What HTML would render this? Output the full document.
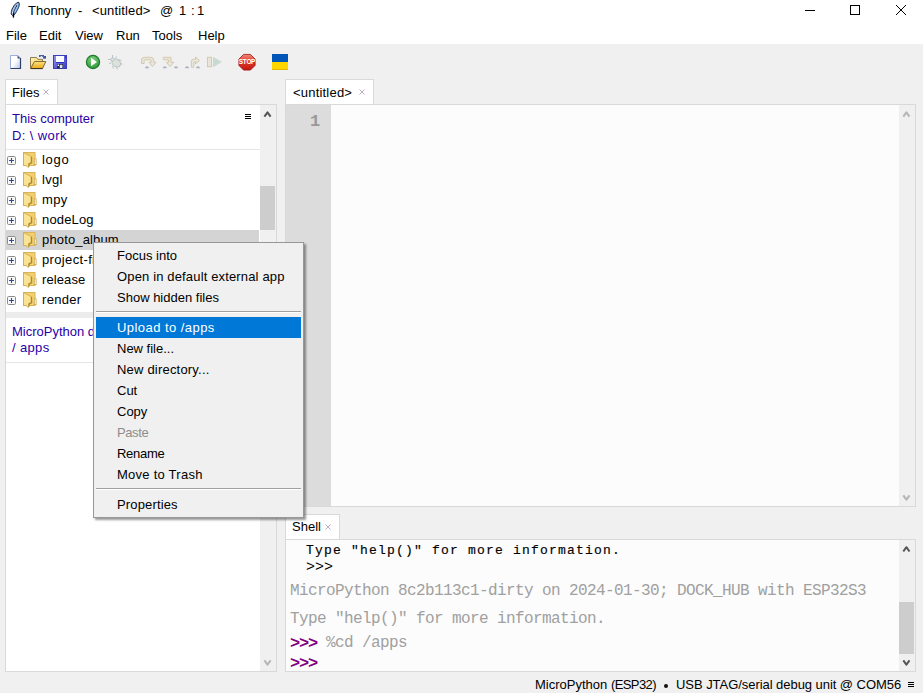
<!DOCTYPE html>
<html><head><meta charset="utf-8">
<style>
*{margin:0;padding:0;box-sizing:border-box}
html,body{width:923px;height:693px;overflow:hidden;background:#f0f0f0;font-family:"Liberation Sans",sans-serif;font-size:13px;color:#000}
.t{position:absolute;white-space:pre;line-height:13px;height:13px}
svg{position:absolute;overflow:visible}
#titlebar{position:absolute;left:0;top:0;width:923px;height:44px;background:#fff}
.box{position:absolute;background:#fff;border:1px solid #d9d9d9}
.sb{position:absolute;background:#f0f0f0}
.thumb{position:absolute;background:#cdcdcd}
.mono{font-family:"Liberation Mono",monospace}
.blue{color:#2a00a8}
</style></head><body>
<div id="titlebar"></div>
<!-- feather icon -->
<svg style="left:8px;top:0px" width="16" height="20" viewBox="0 0 16 20">
 <path d="M10.7,2.2 L11.3,4 L10.8,7 L9.3,10 L7.3,13.5 L6,15.3 L4.6,15.6 L3.2,14 L3.4,11.5 L4,9.3 L5,7.3 L6.5,5 L8.5,3 Z" fill="#9cc2f6" stroke="#111" stroke-width="0.9"/>
 <path d="M10.6,3.5 L10.2,6.8 L8.8,9.8 L7,13 L5.6,14.8 L7.2,13.9 L9.3,10.3 L10.7,7 Z" fill="#3f7fe4"/>
 <path d="M8.8,5.5 L7.2,8.5 L6,11 L5.5,13.5" fill="none" stroke="#111" stroke-width="1.1" stroke-dasharray="1.3,0.9"/>
 <rect x="4" y="12" width="1.2" height="1.4" fill="#fff"/>
 <path d="M5.6,12.5 L5.4,17.6" stroke="#000" stroke-width="1.3"/>
</svg>
<!-- title -->
<div class="t" style="left:28px;top:4px">Thonny</div>
<div class="t" style="left:78px;top:4px">-</div>
<div class="t" style="left:92px;top:4px;letter-spacing:0.15px">&lt;untitled&gt;</div>
<div class="t" style="left:160px;top:4px">@</div>
<div class="t" style="left:179px;top:4px">1</div>
<div class="t" style="left:191px;top:4px">:</div>
<div class="t" style="left:197px;top:4px">1</div>
<!-- window controls -->
<div style="position:absolute;left:805px;top:10px;width:10px;height:1px;background:#000"></div>
<div style="position:absolute;left:850px;top:5px;width:10px;height:10px;border:1px solid #000"></div>
<svg style="left:895px;top:4px" width="12" height="12" viewBox="0 0 12 12" shape-rendering="crispEdges"><path d="M1,1 L11,11 M11,1 L1,11" stroke="#000" stroke-width="1.2"/></svg>

<!-- menu -->
<div class="t" style="left:6px;top:29px">File</div>
<div class="t" style="left:39px;top:29px">Edit</div>
<div class="t" style="left:75px;top:29px">View</div>
<div class="t" style="left:116px;top:29px">Run</div>
<div class="t" style="left:152px;top:29px">Tools</div>
<div class="t" style="left:198px;top:29px">Help</div>

<!-- TOOLBAR -->
<!-- new file -->
<svg style="left:0px;top:0px" width="923" height="80" viewBox="0 0 923 80">
 <defs>
  <linearGradient id="nf" x1="0" y1="0" x2="1" y2="1"><stop offset="0.45" stop-color="#ffffff"/><stop offset="1" stop-color="#b9c6e4"/></linearGradient>
  <linearGradient id="fo" x1="0" y1="0" x2="0" y2="1"><stop offset="0" stop-color="#ffe27a"/><stop offset="1" stop-color="#e9a91c"/></linearGradient>
  <linearGradient id="fb" x1="0" y1="0" x2="1" y2="1"><stop offset="0" stop-color="#fff4b0"/><stop offset="1" stop-color="#efc64a"/></linearGradient>
  <linearGradient id="sv" x1="0" y1="0" x2="1" y2="1"><stop offset="0" stop-color="#9c9cf4"/><stop offset="0.5" stop-color="#6464dc"/><stop offset="1" stop-color="#3c3cb8"/></linearGradient>
  <radialGradient id="rg" cx="0.45" cy="0.3" r="0.7"><stop offset="0" stop-color="#7fd07a"/><stop offset="1" stop-color="#2f9a3c"/></radialGradient>
  <linearGradient id="st" x1="0" y1="0" x2="0" y2="1"><stop offset="0" stop-color="#f08a7a"/><stop offset="0.45" stop-color="#e03a2a"/><stop offset="1" stop-color="#c01810"/></linearGradient>
 </defs>
 <!-- new file -->
 <path d="M10.5,55.5 L18,55.5 L20.5,58 L20.5,68.5 L10.5,68.5 Z" fill="url(#nf)" stroke="#9db0dc" stroke-width="1"/>
 <path d="M20.5,58 L20.5,68.5 L10.5,68.5" fill="none" stroke="#2d4068" stroke-width="1.2"/>
 <path d="M17.5,55.5 L17.5,58.5 L20.5,58.5 Z" fill="#3a4e78"/>
 <!-- open folder -->
 <path d="M30.5,57.5 L36.5,57.5 L37.8,59.3 L42.5,59.3 L42.5,61.5 L30.5,68.5 Z" fill="url(#fb)" stroke="#8c7c52" stroke-width="1"/>
 <path d="M30.5,68.5 L34.5,61.5 L45.8,61.5 L42.5,68.5 Z" fill="url(#fo)" stroke="#7f6a3a" stroke-width="1"/>
 <path d="M31,68.6 L42.6,68.6" stroke="#3a3020" stroke-width="1"/>
 <rect x="39" y="55" width="5" height="1.1" fill="#44639c"/>
 <rect x="39" y="56" width="1.6" height="1" fill="#3c5a98"/>
 <rect x="42.2" y="56" width="0.9" height="0.9" fill="#5a50a0"/>
 <rect x="43.1" y="56" width="2.9" height="2.7" fill="#3c5a98"/>
 <!-- save -->
 <rect x="53" y="55" width="14" height="14" fill="url(#sv)"/>
 <rect x="53.5" y="55.5" width="13" height="13" fill="none" stroke="#3d3dc0" stroke-width="1"/>
 <rect x="56" y="56" width="8" height="6" fill="#fafcff"/>
 <rect x="56" y="62" width="8" height="1" fill="#3030b8"/>
 <rect x="65" y="56.5" width="1" height="1.2" fill="#202060"/>
 <rect x="57" y="64" width="6" height="4.5" fill="#2a2a48"/>
 <rect x="59.8" y="64.8" width="2.6" height="3.2" fill="#dde6ff"/>
 <rect x="57.6" y="64.6" width="1.4" height="1.4" fill="#fff"/>
 <!-- run -->
 <circle cx="93" cy="62" r="6.6" fill="url(#rg)" stroke="#1d7a2c" stroke-width="1.2"/>
 <path d="M91,57.8 L97,62 L91,66.2 Z" fill="#fff"/>
 <!-- bug (disabled) -->
 <g stroke="#b9c2c2" stroke-width="1" fill="none">
  <path d="M112.5,55 L112.5,58 M108,59.5 L111,59.5 M116.5,56.5 L115.5,58.5 M118,59.5 L121.5,60.5 M120.5,63 L122.5,64.5 M109,63.5 L111,63 M112.5,66 L113.5,68.5 M116.5,67 L117.5,69.5"/>
 </g>
 <ellipse cx="116.3" cy="63" rx="4.6" ry="3.6" transform="rotate(35 116.3 63)" fill="#dfe2da" stroke="#b3c2c8" stroke-width="1"/>
 <circle cx="112.5" cy="59.5" r="1.7" fill="#dfe2da" stroke="#b3c2c8" stroke-width="0.8"/>
 <!-- step over -->
 <g fill="#e9e6dc" stroke="#d4c9ad" stroke-width="1">
  <path d="M141.5,63.5 L141.5,60 Q141.5,57.3 144.5,57.3 L150.5,57.3 Q153.8,57.3 153.8,60.5 L153.8,62.3 L156,62.3 L152.5,66.6 L149,62.3 L151.2,62.3 L151.2,60.8 Q151.2,59.8 150.2,59.8 L145,59.8 Q144.1,59.8 144.1,60.6 L144.1,63.5 Z"/>
 </g>
 <path d="M145.0,68.3 Q145.0,66.2 147.0,66.2 Q149.0,66.2 149.0,68.3 Z" fill="#a9b1c1"/>
 <!-- step into -->
 <g fill="#e9e6dc" stroke="#d4c9ad" stroke-width="1">
  <path d="M163.3,57.3 L171,57.3 L171,62.3 L173.8,62.3 L170,66.6 L166.4,62.3 L168.5,62.3 L168.5,59.8 L164,59.8 Q163.3,59.8 163.3,58.8 Z"/>
 </g>
 <path d="M162.8,68.3 Q162.8,66.2 164.8,66.2 Q166.8,66.2 166.8,68.3 Z" fill="#a9b1c1"/>
 <path d="M174.0,68.3 Q174.0,66.2 176.0,66.2 Q178.0,66.2 178.0,68.3 Z" fill="#a9b1c1"/>
 <!-- step out -->
 <g fill="#e9e6dc" stroke="#d4c9ad" stroke-width="1">
  <path d="M191.3,67.3 L191.3,61.5 Q191.3,59.3 193.5,59.3 L195.5,59.3 L195.5,57 L199.6,60.5 L195.5,63.9 L195.5,61.8 L194.3,61.8 Q193.8,61.8 193.8,62.3 L193.8,67.3 Z"/>
 </g>
 <path d="M185.0,68.3 Q185.0,66.2 187.0,66.2 Q189.0,66.2 189.0,68.3 Z" fill="#a9b1c1"/>
 <path d="M196.0,68.3 Q196.0,66.2 198.0,66.2 Q200.0,66.2 200.0,68.3 Z" fill="#a9b1c1"/>
 <!-- resume -->
 <rect x="207.5" y="57.3" width="4" height="9.4" fill="#e9e6dc" stroke="#d4c9ad" stroke-width="1"/>
 <path d="M213,56.8 L222,62 L213,67.2 Z" fill="#c9dace"/>
 <!-- stop -->
 <path d="M243.6,54.4 L250.4,54.4 L255.1,59.1 L255.1,65.4 L250.4,70.1 L243.6,70.1 L238.9,65.4 L238.9,59.1 Z" fill="url(#st)" stroke="#a01010" stroke-width="0.8"/>
 <text x="247" y="64.4" font-family="Liberation Sans" font-weight="bold" font-size="6.4" fill="#fff" text-anchor="middle" letter-spacing="-0.25">STOP</text>
 <!-- flag -->
 <rect x="272" y="54" width="16" height="8" fill="#0057b7"/>
 <rect x="272" y="62" width="16" height="8" fill="#ffd500"/>
 <rect x="272" y="69" width="16" height="1" fill="#e8b800"/>
</svg>


<!-- Files tab -->
<div class="box" style="left:5px;top:79px;width:53px;height:26px;border-bottom:none"></div>
<div class="t" style="left:12px;top:86px">Files</div>
<svg style="left:43px;top:89px" width="6" height="6" viewBox="0 0 6 6"><path d="M0.5,0.5 L5.5,5.5 M5.5,0.5 L0.5,5.5" stroke="#c0aac4" stroke-width="1"/></svg>
<!-- Files panel -->
<div class="box" style="left:5px;top:104px;width:272px;height:568px"></div>
<div class="sb" style="left:260px;top:105px;width:16px;height:566px"></div>
<div class="thumb" style="left:260px;top:186px;width:15px;height:44px"></div>
<div style="position:absolute;left:6px;top:149px;width:254px;height:1px;background:#e6e6e6"></div>
<div class="t blue" style="left:12px;top:112px">This computer</div>
<div class="t blue" style="left:12px;top:129px;letter-spacing:0.4px">D: \ work</div>
<div style="position:absolute;left:245px;top:114px;width:6px;height:5px;border-top:1px solid #000;border-bottom:1px solid #000"></div><div style="position:absolute;left:245px;top:116px;width:6px;height:1px;background:#000"></div>
<svg style="left:7px;top:156px" width="9" height="9" viewBox="0 0 9 9">
<rect x="0.5" y="0.5" width="8" height="8" rx="1.2" fill="#f8f8f8" stroke="#8a8a8a" stroke-width="1"/>
<path d="M2,4.5 L7,4.5 M4.5,2 L4.5,7" stroke="#2b4c9c" stroke-width="1.1"/>
</svg>
<svg style="left:22px;top:150px" width="15" height="18" viewBox="0 0 15 18">
<defs><linearGradient id="ff0" x1="0" y1="0" x2="1" y2="0"><stop offset="0" stop-color="#fde99a"/><stop offset="1" stop-color="#f6d77a"/></linearGradient></defs>
<rect x="1.5" y="2.5" width="11.5" height="13" fill="#f4cf6e" stroke="#d9b458" stroke-width="1"/>
<rect x="12.3" y="8.8" width="1.8" height="5.8" fill="#fff" stroke="#c9a84c" stroke-width="0.8"/>
<path d="M1.5,2.5 L9,6.5 L9,12.5 L6.5,13.5 L6.5,17.5 L4,15.5 L1.5,15.5 Z" fill="#fbe394" stroke="#cfae52" stroke-width="0.9"/>
<path d="M9.6,6.8 L9.6,12.9 L7.1,13.9 L7.1,16.5" fill="none" stroke="#a8882e" stroke-width="1.1"/>
</svg>
<div class="t" style="left:42px;top:153px;letter-spacing:0.7px">logo</div>
<svg style="left:7px;top:176px" width="9" height="9" viewBox="0 0 9 9">
<rect x="0.5" y="0.5" width="8" height="8" rx="1.2" fill="#f8f8f8" stroke="#8a8a8a" stroke-width="1"/>
<path d="M2,4.5 L7,4.5 M4.5,2 L4.5,7" stroke="#2b4c9c" stroke-width="1.1"/>
</svg>
<svg style="left:22px;top:170px" width="15" height="18" viewBox="0 0 15 18">
<defs><linearGradient id="ff1" x1="0" y1="0" x2="1" y2="0"><stop offset="0" stop-color="#fde99a"/><stop offset="1" stop-color="#f6d77a"/></linearGradient></defs>
<rect x="1.5" y="2.5" width="11.5" height="13" fill="#f4cf6e" stroke="#d9b458" stroke-width="1"/>
<rect x="12.3" y="8.8" width="1.8" height="5.8" fill="#fff" stroke="#c9a84c" stroke-width="0.8"/>
<path d="M1.5,2.5 L9,6.5 L9,12.5 L6.5,13.5 L6.5,17.5 L4,15.5 L1.5,15.5 Z" fill="#fbe394" stroke="#cfae52" stroke-width="0.9"/>
<path d="M9.6,6.8 L9.6,12.9 L7.1,13.9 L7.1,16.5" fill="none" stroke="#a8882e" stroke-width="1.1"/>
</svg>
<div class="t" style="left:42px;top:173px;letter-spacing:0.3px">lvgl</div>
<svg style="left:7px;top:196px" width="9" height="9" viewBox="0 0 9 9">
<rect x="0.5" y="0.5" width="8" height="8" rx="1.2" fill="#f8f8f8" stroke="#8a8a8a" stroke-width="1"/>
<path d="M2,4.5 L7,4.5 M4.5,2 L4.5,7" stroke="#2b4c9c" stroke-width="1.1"/>
</svg>
<svg style="left:22px;top:190px" width="15" height="18" viewBox="0 0 15 18">
<defs><linearGradient id="ff2" x1="0" y1="0" x2="1" y2="0"><stop offset="0" stop-color="#fde99a"/><stop offset="1" stop-color="#f6d77a"/></linearGradient></defs>
<rect x="1.5" y="2.5" width="11.5" height="13" fill="#f4cf6e" stroke="#d9b458" stroke-width="1"/>
<rect x="12.3" y="8.8" width="1.8" height="5.8" fill="#fff" stroke="#c9a84c" stroke-width="0.8"/>
<path d="M1.5,2.5 L9,6.5 L9,12.5 L6.5,13.5 L6.5,17.5 L4,15.5 L1.5,15.5 Z" fill="#fbe394" stroke="#cfae52" stroke-width="0.9"/>
<path d="M9.6,6.8 L9.6,12.9 L7.1,13.9 L7.1,16.5" fill="none" stroke="#a8882e" stroke-width="1.1"/>
</svg>
<div class="t" style="left:42px;top:193px;letter-spacing:0.3px">mpy</div>
<svg style="left:7px;top:216px" width="9" height="9" viewBox="0 0 9 9">
<rect x="0.5" y="0.5" width="8" height="8" rx="1.2" fill="#f8f8f8" stroke="#8a8a8a" stroke-width="1"/>
<path d="M2,4.5 L7,4.5 M4.5,2 L4.5,7" stroke="#2b4c9c" stroke-width="1.1"/>
</svg>
<svg style="left:22px;top:210px" width="15" height="18" viewBox="0 0 15 18">
<defs><linearGradient id="ff3" x1="0" y1="0" x2="1" y2="0"><stop offset="0" stop-color="#fde99a"/><stop offset="1" stop-color="#f6d77a"/></linearGradient></defs>
<rect x="1.5" y="2.5" width="11.5" height="13" fill="#f4cf6e" stroke="#d9b458" stroke-width="1"/>
<rect x="12.3" y="8.8" width="1.8" height="5.8" fill="#fff" stroke="#c9a84c" stroke-width="0.8"/>
<path d="M1.5,2.5 L9,6.5 L9,12.5 L6.5,13.5 L6.5,17.5 L4,15.5 L1.5,15.5 Z" fill="#fbe394" stroke="#cfae52" stroke-width="0.9"/>
<path d="M9.6,6.8 L9.6,12.9 L7.1,13.9 L7.1,16.5" fill="none" stroke="#a8882e" stroke-width="1.1"/>
</svg>
<div class="t" style="left:42px;top:213px;letter-spacing:0.15px">nodeLog</div>
<div style="position:absolute;left:6px;top:230px;width:253px;height:20px;background:#d4d4d4"></div>
<svg style="left:7px;top:236px" width="9" height="9" viewBox="0 0 9 9">
<rect x="0.5" y="0.5" width="8" height="8" rx="1.2" fill="#f8f8f8" stroke="#8a8a8a" stroke-width="1"/>
<path d="M2,4.5 L7,4.5 M4.5,2 L4.5,7" stroke="#2b4c9c" stroke-width="1.1"/>
</svg>
<svg style="left:22px;top:230px" width="15" height="18" viewBox="0 0 15 18">
<defs><linearGradient id="ff4" x1="0" y1="0" x2="1" y2="0"><stop offset="0" stop-color="#fde99a"/><stop offset="1" stop-color="#f6d77a"/></linearGradient></defs>
<rect x="1.5" y="2.5" width="11.5" height="13" fill="#f4cf6e" stroke="#d9b458" stroke-width="1"/>
<rect x="12.3" y="8.8" width="1.8" height="5.8" fill="#fff" stroke="#c9a84c" stroke-width="0.8"/>
<path d="M1.5,2.5 L9,6.5 L9,12.5 L6.5,13.5 L6.5,17.5 L4,15.5 L1.5,15.5 Z" fill="#fbe394" stroke="#cfae52" stroke-width="0.9"/>
<path d="M9.6,6.8 L9.6,12.9 L7.1,13.9 L7.1,16.5" fill="none" stroke="#a8882e" stroke-width="1.1"/>
</svg>
<div class="t" style="left:42px;top:233px;letter-spacing:0.15px">photo_album</div>
<svg style="left:7px;top:256px" width="9" height="9" viewBox="0 0 9 9">
<rect x="0.5" y="0.5" width="8" height="8" rx="1.2" fill="#f8f8f8" stroke="#8a8a8a" stroke-width="1"/>
<path d="M2,4.5 L7,4.5 M4.5,2 L4.5,7" stroke="#2b4c9c" stroke-width="1.1"/>
</svg>
<svg style="left:22px;top:250px" width="15" height="18" viewBox="0 0 15 18">
<defs><linearGradient id="ff5" x1="0" y1="0" x2="1" y2="0"><stop offset="0" stop-color="#fde99a"/><stop offset="1" stop-color="#f6d77a"/></linearGradient></defs>
<rect x="1.5" y="2.5" width="11.5" height="13" fill="#f4cf6e" stroke="#d9b458" stroke-width="1"/>
<rect x="12.3" y="8.8" width="1.8" height="5.8" fill="#fff" stroke="#c9a84c" stroke-width="0.8"/>
<path d="M1.5,2.5 L9,6.5 L9,12.5 L6.5,13.5 L6.5,17.5 L4,15.5 L1.5,15.5 Z" fill="#fbe394" stroke="#cfae52" stroke-width="0.9"/>
<path d="M9.6,6.8 L9.6,12.9 L7.1,13.9 L7.1,16.5" fill="none" stroke="#a8882e" stroke-width="1.1"/>
</svg>
<div class="t" style="left:42px;top:253px;letter-spacing:0.35px">project-files</div>
<svg style="left:7px;top:276px" width="9" height="9" viewBox="0 0 9 9">
<rect x="0.5" y="0.5" width="8" height="8" rx="1.2" fill="#f8f8f8" stroke="#8a8a8a" stroke-width="1"/>
<path d="M2,4.5 L7,4.5 M4.5,2 L4.5,7" stroke="#2b4c9c" stroke-width="1.1"/>
</svg>
<svg style="left:22px;top:270px" width="15" height="18" viewBox="0 0 15 18">
<defs><linearGradient id="ff6" x1="0" y1="0" x2="1" y2="0"><stop offset="0" stop-color="#fde99a"/><stop offset="1" stop-color="#f6d77a"/></linearGradient></defs>
<rect x="1.5" y="2.5" width="11.5" height="13" fill="#f4cf6e" stroke="#d9b458" stroke-width="1"/>
<rect x="12.3" y="8.8" width="1.8" height="5.8" fill="#fff" stroke="#c9a84c" stroke-width="0.8"/>
<path d="M1.5,2.5 L9,6.5 L9,12.5 L6.5,13.5 L6.5,17.5 L4,15.5 L1.5,15.5 Z" fill="#fbe394" stroke="#cfae52" stroke-width="0.9"/>
<path d="M9.6,6.8 L9.6,12.9 L7.1,13.9 L7.1,16.5" fill="none" stroke="#a8882e" stroke-width="1.1"/>
</svg>
<div class="t" style="left:42px;top:273px;letter-spacing:0.1px">release</div>
<svg style="left:7px;top:296px" width="9" height="9" viewBox="0 0 9 9">
<rect x="0.5" y="0.5" width="8" height="8" rx="1.2" fill="#f8f8f8" stroke="#8a8a8a" stroke-width="1"/>
<path d="M2,4.5 L7,4.5 M4.5,2 L4.5,7" stroke="#2b4c9c" stroke-width="1.1"/>
</svg>
<svg style="left:22px;top:290px" width="15" height="18" viewBox="0 0 15 18">
<defs><linearGradient id="ff7" x1="0" y1="0" x2="1" y2="0"><stop offset="0" stop-color="#fde99a"/><stop offset="1" stop-color="#f6d77a"/></linearGradient></defs>
<rect x="1.5" y="2.5" width="11.5" height="13" fill="#f4cf6e" stroke="#d9b458" stroke-width="1"/>
<rect x="12.3" y="8.8" width="1.8" height="5.8" fill="#fff" stroke="#c9a84c" stroke-width="0.8"/>
<path d="M1.5,2.5 L9,6.5 L9,12.5 L6.5,13.5 L6.5,17.5 L4,15.5 L1.5,15.5 Z" fill="#fbe394" stroke="#cfae52" stroke-width="0.9"/>
<path d="M9.6,6.8 L9.6,12.9 L7.1,13.9 L7.1,16.5" fill="none" stroke="#a8882e" stroke-width="1.1"/>
</svg>
<div class="t" style="left:42px;top:293px;letter-spacing:0.3px">render</div>
<div style="position:absolute;left:6px;top:312px;width:254px;height:6px;background:#ececec"></div>
<div class="t blue" style="left:12px;top:325px">MicroPython device</div>
<div class="t blue" style="left:12px;top:341px;letter-spacing:0.35px">/ apps</div>
<div style="position:absolute;left:6px;top:362px;width:254px;height:1px;background:#e6e6e6"></div>

<!-- Editor tab -->
<div class="box" style="left:285px;top:79px;width:89px;height:26px;border-bottom:none"></div>
<div class="t" style="left:293px;top:86px;letter-spacing:0.2px">&lt;untitled&gt;</div>
<svg style="left:359px;top:89px" width="6" height="6" viewBox="0 0 6 6"><path d="M0.5,0.5 L5.5,5.5 M5.5,0.5 L0.5,5.5" stroke="#c0aac4" stroke-width="1"/></svg>
<!-- Editor -->
<div class="box" style="left:285px;top:104px;width:631px;height:403px;background:#fcfcfc"></div>
<div style="position:absolute;left:286px;top:105px;width:45px;height:401px;background:#dcdcdc"></div>
<div class="sb" style="left:899px;top:105px;width:16px;height:401px"></div>
<div class="t mono" style="left:310px;top:113px;font-size:17px;line-height:17px;height:17px;color:#999;font-weight:bold">1</div>

<!-- Shell tab -->
<div class="box" style="left:285px;top:514px;width:55px;height:26px;border-bottom:none"></div>
<div class="t" style="left:292px;top:520px">Shell</div>
<svg style="left:325px;top:524px" width="6" height="6" viewBox="0 0 6 6"><path d="M0.5,0.5 L5.5,5.5 M5.5,0.5 L0.5,5.5" stroke="#c0aac4" stroke-width="1"/></svg>
<!-- Shell -->
<div class="box" style="left:285px;top:539px;width:631px;height:133px;background:#fcfcfc"></div>
<div class="sb" style="left:899px;top:540px;width:16px;height:131px"></div>
<div class="thumb" style="left:899px;top:602px;width:15px;height:52px"></div>
<div class="t mono" style="left:306px;top:544px;font-size:13px;line-height:13px;height:13px;letter-spacing:1.2px;color:#000;-webkit-text-stroke:0.15px #000">Type "help()" for more information.</div>
<div class="t mono" style="left:306px;top:560px;font-size:15px;line-height:15px;height:15px;color:#000">&gt;&gt;&gt;</div>
<div class="t mono" style="left:290px;top:583px;font-size:16px;line-height:16px;height:16px;letter-spacing:-0.6px;color:#a0a0a0">MicroPython 8c2b113c1-dirty on 2024-01-30; DOCK_HUB with ESP32S3</div>
<div class="t mono" style="left:290px;top:611px;font-size:16px;line-height:16px;height:16px;letter-spacing:-0.6px;color:#a0a0a0">Type "help()" for more information.</div>
<div class="t mono" style="left:290px;top:635px;font-size:17px;line-height:17px;height:17px;letter-spacing:-1.2px;color:#800080;font-weight:bold">&gt;&gt;&gt;</div>
<div class="t mono" style="left:326px;top:635px;font-size:16px;line-height:16px;height:16px;letter-spacing:-0.6px;color:#a0a0a0">%cd /apps</div>
<div class="t mono" style="left:290px;top:655px;font-size:17px;line-height:17px;height:17px;letter-spacing:-1.2px;color:#800080;font-weight:bold">&gt;&gt;&gt;</div>


<!-- status -->
<div class="t" style="left:535px;top:678px">MicroPython</div>
<div class="t" style="left:611px;top:678px;letter-spacing:-0.6px">(ESP32)</div>
<div style="position:absolute;left:664px;top:684px;width:4px;height:4px;border-radius:2px;background:#111"></div>
<div class="t" style="left:676px;top:678px;letter-spacing:-0.05px">USB JTAG/serial debug unit @ COM56</div>
<div style="position:absolute;left:908px;top:682px;width:6px;height:5px;border-top:1px solid #000;border-bottom:1px solid #000"></div><div style="position:absolute;left:908px;top:684px;width:6px;height:1px;background:#000"></div>

<svg style="left:0;top:0" width="923" height="693" viewBox="0 0 923 693">
 <g fill="none" stroke-width="2" stroke-linejoin="round">
  <path d="M264.4,116.6 L267.5,112.3 L270.6,116.6" stroke="#555"/>
  <path d="M264.4,660.3 L267.5,664.6 L270.6,660.3" stroke="#b6b6b6"/>
  <path d="M903.3,116.6 L906.4,112.3 L909.5,116.6" stroke="#b6b6b6"/>
  <path d="M903.3,495.3 L906.4,499.6 L909.5,495.3" stroke="#b6b6b6"/>
  <path d="M903.3,551.5 L906.4,547.2 L909.5,551.5" stroke="#555"/>
  <path d="M903.3,660.3 L906.4,664.6 L909.5,660.3" stroke="#555"/>
 </g>
</svg>

<!-- context menu -->
<div style="position:absolute;left:93px;top:242px;width:211px;height:276px;background:#f0f0f0;border:1px solid #979797;box-shadow:2px 2px 2px rgba(0,0,0,0.4)"></div>
<div class="t" style="left:117px;top:249px;color:#000;letter-spacing:0px">Focus into</div>
<div class="t" style="left:117px;top:270px;color:#000;letter-spacing:0.15px">Open in default external app</div>
<div class="t" style="left:117px;top:291px;color:#000;letter-spacing:0px">Show hidden files</div>
<div style="position:absolute;left:96px;top:311px;width:205px;height:1px;background:#a0a0a0"></div>
<div style="position:absolute;left:96px;top:312px;width:205px;height:1px;background:#ffffff"></div>
<div style="position:absolute;left:96px;top:317px;width:205px;height:21px;background:#0078d7"></div>
<div class="t" style="left:117px;top:321px;color:#fff;letter-spacing:0.45px">Upload to /apps</div>
<div class="t" style="left:117px;top:342px;color:#000;letter-spacing:0px">New file...</div>
<div class="t" style="left:117px;top:363px;color:#000;letter-spacing:0.2px">New directory...</div>
<div class="t" style="left:117px;top:384px;color:#000;letter-spacing:0px">Cut</div>
<div class="t" style="left:117px;top:405px;color:#000;letter-spacing:0px">Copy</div>
<div class="t" style="left:117px;top:426px;color:#8d8d8d;letter-spacing:-0.4px">Paste</div>
<div class="t" style="left:117px;top:447px;color:#000;letter-spacing:-0.3px">Rename</div>
<div class="t" style="left:117px;top:468px;color:#000;letter-spacing:0.25px">Move to Trash</div>
<div style="position:absolute;left:96px;top:488px;width:205px;height:1px;background:#a0a0a0"></div>
<div style="position:absolute;left:96px;top:489px;width:205px;height:1px;background:#ffffff"></div>
<div class="t" style="left:117px;top:498px;color:#000;letter-spacing:0.15px">Properties</div>
</body></html>
